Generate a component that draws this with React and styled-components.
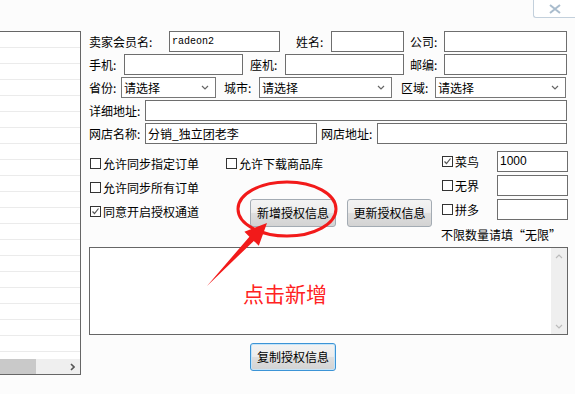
import React from 'react';
import styled, { createGlobalStyle, css } from 'styled-components';

const GlobalStyle = createGlobalStyle`
  body {
    margin: 0;
    background: #fcfcfc;
    font-family: "Noto Sans CJK SC", "Noto Sans", sans-serif;
    font-size: 12px;
    color: #000;
  }
`;

const Page = styled.div`
  position: relative;
  width: 575px;
  height: 394px;
  overflow: hidden;
  background: #fcfcfc;
`;

const TitleBar = styled.div`
  height: 31px;
  display: flex;
  justify-content: flex-end;
  align-items: flex-start;
`;

const CloseButton = styled.div`
  width: 42px;
  height: 18px;
  box-sizing: border-box;
  border: 1px solid #c3d0dc;
  border-top: none;
  border-right: none;
  border-bottom-left-radius: 3px;
  background: #fff;
  display: flex;
  align-items: center;
  justify-content: center;
`;

const Main = styled.div`
  display: flex;
  align-items: flex-start;
`;

const ListPanel = styled.div`
  width: 81px;
  height: 344px;
  box-sizing: border-box;
  border: 1px solid #666;
  border-left: none;
  background: #fff;
  display: flex;
  flex-direction: column;
`;

const ListRows = styled.div`
  flex: 1;
  overflow: hidden;
`;

const ListRow = styled.div`
  height: 15px;
  border-bottom: 1px solid #ebebeb;
`;

const HScroll = styled.div`
  height: 15px;
  background: #efefef;
  display: flex;
  align-items: center;
`;

const HThumb = styled.div`
  width: 36px;
  height: 15px;
  background: #c9c9c9;
`;

const ScrollArrowRight = styled.div`
  margin-left: auto;
  margin-right: 5px;
  display: flex;
`;

const Form = styled.div`
  margin-left: 8px;
  width: 479px;
  display: flex;
  flex-direction: column;
`;

const Fields = styled.div`
  display: flex;
  flex-direction: column;
  gap: 2px;
`;

const Row = styled.div`
  display: flex;
  align-items: center;
  height: 21px;
`;

const Label = styled.span`
  width: ${(p) => p.$w}px;
  margin-left: ${(p) => p.$ml || 0}px;
  flex-shrink: 0;
  white-space: nowrap;
  line-height: 21px;
`;

const TextBox = styled.div`
  width: ${(p) => p.$w}px;
  height: 21px;
  box-sizing: border-box;
  border: 1px solid #6e6e6e;
  background: #fff;
  flex-shrink: 0;
  padding-left: 2px;
  line-height: 19px;
  white-space: nowrap;
  overflow: hidden;
  ${(p) =>
    p.$mono &&
    css`
      font-family: "Liberation Mono", monospace;
      font-size: 10px;
    `}
  ${(p) =>
    p.$latin &&
    css`
      font-family: "Liberation Sans", Arial, sans-serif;
      font-size: 12px;
    `}
`;

const Select = styled.div`
  width: ${(p) => p.$w}px;
  height: 21px;
  box-sizing: border-box;
  border: 1px solid #777;
  background: #fff;
  flex-shrink: 0;
  display: flex;
  align-items: center;
  padding: 0 6px 0 2px;
  line-height: 19px;
  white-space: nowrap;

  & > span {
    flex: 1;
  }
`;

const Options = styled.div`
  margin-top: 7px;
  height: 96px;
  display: flex;
`;

const Column = styled.div`
  width: ${(p) => p.$w}px;
  flex-shrink: 0;
  display: flex;
  flex-direction: column;
  gap: ${(p) => p.$gap || 0}px;
`;

const CheckRow = styled.label`
  display: flex;
  align-items: center;
  height: 24px;
  gap: 2px;
  white-space: nowrap;
`;

const Box = styled.span`
  width: 11px;
  height: 11px;
  box-sizing: border-box;
  border: 1px solid #333;
  background: #fff;
  display: flex;
  align-items: center;
  justify-content: center;
  margin-left: 1px;
`;

const ButtonRow = styled.div`
  margin-top: 24px;
  padding-left: 25px;
  display: flex;
  gap: 11px;
`;

const Button = styled.button`
  width: ${(p) => p.$w || 86}px;
  height: 28px;
  padding: 0;
  box-sizing: border-box;
  border: 1px solid ${(p) => (p.$focused ? '#3c94d6' : '#a3abb3')};
  border-radius: 3px;
  background: linear-gradient(#f3f3f3 0%, #ececec 48%, #dedede 52%, #d3d3d3 100%);
  font-family: "Noto Sans CJK SC", sans-serif;
  font-size: 12px;
  color: #000;
  line-height: 26px;
  box-shadow: ${(p) => (p.$focused ? 'inset 0 0 0 1px #c5e4f8' : 'none')};
`;

const SideRow = styled.div`
  display: flex;
  align-items: center;
  height: 21px;
  justify-content: space-between;
`;

const SideCheck = styled.label`
  display: flex;
  align-items: center;
  gap: 2px;
`;

const Note = styled.div`
  margin-top: 4px;
  line-height: 16px;
  white-space: nowrap;
`;

const TextArea = styled.div`
  position: relative;
  height: 88px;
  box-sizing: border-box;
  border: 1px solid #666;
  background: #fff;
  display: flex;
  justify-content: flex-end;
`;

const VScroll = styled.div`
  width: 16px;
  background: #efefef;
  display: flex;
  flex-direction: column;
  justify-content: space-between;
  align-items: center;
  padding: 6px 0 5px;
`;

const Hint = styled.div`
  position: absolute;
  left: 153px;
  top: 35px;
  font-size: 21px;
  line-height: 1;
  color: #ff2222;
  white-space: nowrap;
`;

const CopyRow = styled.div`
  margin-top: 8px;
  padding-left: 161px;
`;

const Annotation = styled.svg`
  position: absolute;
  left: 0;
  top: 0;
  pointer-events: none;
`;

const Chevron = ({ dir = 'down', color = '#666' }) => {
  const d = {
    down: 'M1 1 L4 4 L7 1',
    up: 'M1 4 L4 1 L7 4',
  }[dir];
  return (
    <svg width="8" height="5" viewBox="0 0 8 5">
      <path d={d} fill="none" stroke={color} strokeWidth="1.2" />
    </svg>
  );
};

const CheckBox = ({ checked }) => (
  <Box>
    {checked && (
      <svg width="9" height="9" viewBox="0 0 9 9">
        <path d="M1.5 4.5 L3.5 6.5 L7.5 1.5" fill="none" stroke="#555" strokeWidth="1.2" />
      </svg>
    )}
  </Box>
);

const Check = ({ checked, children }) => (
  <CheckRow>
    <CheckBox checked={checked} />
    <span>{children}</span>
  </CheckRow>
);

const Dropdown = ({ w }) => (
  <Select $w={w}>
    <span>请选择</span>
    <Chevron />
  </Select>
);

const App = () => (
  <Page>
    <GlobalStyle />
    <TitleBar>
      <CloseButton>
        <svg width="12" height="10" viewBox="0 0 12 10">
          <path d="M1 1 L11 9 M11 1 L1 9" stroke="#a9bccd" strokeWidth="2" fill="none" />
        </svg>
      </CloseButton>
    </TitleBar>
    <Main>
      <ListPanel>
        <ListRows>
          {Array.from({ length: 21 }).map((_, i) => (
            <ListRow key={i} />
          ))}
        </ListRows>
        <HScroll>
          <HThumb />
          <ScrollArrowRight>
            <svg width="5" height="8" viewBox="0 0 5 8">
              <path d="M1 1 L4 4 L1 7" fill="none" stroke="#555" strokeWidth="1.6" />
            </svg>
          </ScrollArrowRight>
        </HScroll>
      </ListPanel>

      <Form>
        <Fields>
          <Row>
            <Label $w={80}>卖家会员名:</Label>
            <TextBox $w={111} $mono>radeon2</TextBox>
            <Label $w={35} $ml={16}>姓名:</Label>
            <TextBox $w={73} />
            <Label $w={34} $ml={6}>公司:</Label>
            <TextBox $w={123} />
          </Row>
          <Row>
            <Label $w={35}>手机:</Label>
            <TextBox $w={119} />
            <Label $w={35} $ml={7}>座机:</Label>
            <TextBox $w={119} />
            <Label $w={34} $ml={6}>邮编:</Label>
            <TextBox $w={123} />
          </Row>
          <Row>
            <Label $w={32}>省份:</Label>
            <Dropdown w={95} />
            <Label $w={35} $ml={8}>城市:</Label>
            <Dropdown w={133} />
            <Label $w={34} $ml={9}>区域:</Label>
            <Dropdown w={131} />
          </Row>
          <Row>
            <Label $w={56}>详细地址:</Label>
            <TextBox $w={422} />
          </Row>
          <Row>
            <Label $w={56}>网店名称:</Label>
            <TextBox $w={172}>分销_独立团老李</TextBox>
            <Label $w={56} $ml={4}>网店地址:</Label>
            <TextBox $w={190} />
          </Row>
        </Fields>

        <Options>
          <Column $w={136}>
            <Check>允许同步指定订单</Check>
            <Check>允许同步所有订单</Check>
            <Check checked>同意开启授权通道</Check>
          </Column>
          <Column $w={216}>
            <Check>允许下载商品库</Check>
            <ButtonRow>
              <Button $w={86}>新增授权信息</Button>
              <Button $w={85}>更新授权信息</Button>
            </ButtonRow>
          </Column>
          <Column $w={127} $gap={3}>
            <SideRow>
              <SideCheck>
                <CheckBox checked />
                <span>菜鸟</span>
              </SideCheck>
              <TextBox $w={71} $latin>1000</TextBox>
            </SideRow>
            <SideRow>
              <SideCheck>
                <CheckBox />
                <span>无界</span>
              </SideCheck>
              <TextBox $w={71} />
            </SideRow>
            <SideRow>
              <SideCheck>
                <CheckBox />
                <span>拼多</span>
              </SideCheck>
              <TextBox $w={71} />
            </SideRow>
            <Note>不限数量请填“无限”</Note>
          </Column>
        </Options>

        <TextArea>
          <Hint>点击新增</Hint>
          <VScroll>
            <Chevron dir="up" color="#bcbcbc" />
            <Chevron dir="down" color="#bcbcbc" />
          </VScroll>
        </TextArea>

        <CopyRow>
          <Button $w={86} $focused>复制授权信息</Button>
        </CopyRow>
      </Form>
    </Main>

    <Annotation width="575" height="394" viewBox="0 0 575 394">
      <ellipse cx="287" cy="209" rx="49" ry="27" fill="none" stroke="#f21a1a" strokeWidth="3" />
      <polygon
        points="267,223 258.8,245.8 253.8,240.9 207,286 249.4,236.7 244.4,231.8"
        fill="#f21a1a"
      />
    </Annotation>
  </Page>
);

export default App;
